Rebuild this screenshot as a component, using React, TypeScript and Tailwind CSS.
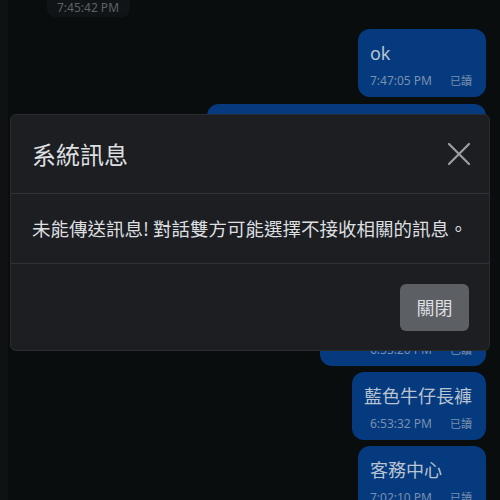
import React from "react";

const font = { fontFamily: '"Noto Sans", "Noto Sans CJK TC", sans-serif' };

function Sent({ text, time, className = "" }: { text: string; time: string; className?: string }) {
  return (
    <div className={"rounded-[12px] bg-[#053a7e] pl-3 pr-[14px] pt-[10px] pb-[8px] " + className}>
      <div className="text-[18px] leading-[28px] text-[#b9c3d1] whitespace-nowrap">{text}</div>
      <div className="mt-[6px] flex items-center justify-end leading-[16px] text-[#7b8fae] whitespace-nowrap">
        <span className="text-[12px]">{time}</span>
        <span className="ml-[18px] text-[11px]">已讀</span>
      </div>
    </div>
  );
}

export default function App() {
  return (
    <div className="relative h-[500px] w-[500px] overflow-hidden bg-[#0a0d0e]" style={font}>
      <div className="flex h-full">
        <div className="w-[8px] shrink-0 bg-[#0f1213]" />
        <div className="flex flex-1 flex-col pr-[14px]">
          <div className="-mt-[22px] ml-[39px] w-[83px] rounded-b-[8px] bg-[#111416] pt-[24px] pb-[3px] pl-[10px]">
            <div className="text-[12px] leading-[12px] text-[#5d6266] whitespace-nowrap">7:45:42 PM</div>
          </div>
          <div className="mt-[12px] flex flex-col items-end gap-[7px]">
            <Sent text="ok" time="7:47:05 PM" />
            <div className="h-[124px] w-[279px] rounded-[12px] bg-[#053a7e]" />
            <div className="flex h-[131px] w-[166px] flex-col justify-end rounded-[12px] bg-[#053a7e] pb-[8px] pl-3 pr-[14px]">
              <div className="flex items-center justify-end leading-[16px] text-[#7b8fae]">
                <span className="text-[12px]">6:53:20 PM</span>
                <span className="ml-[18px] text-[11px]">已讀</span>
              </div>
            </div>
            <Sent text="藍色牛仔長褲" time="6:53:32 PM" className="-mt-[1px]" />
            <Sent text="客務中心" time="7:02:10 PM" className="-mt-[1px]" />
          </div>
        </div>
      </div>

      <div className="absolute left-[10px] top-[114px] w-[480px] rounded-[6px] border border-[#2a2d30] bg-[#1c1e21]">
        <div className="flex h-[79px] items-center justify-between border-b border-[#2f3236] pl-[21px] pr-[18px]">
          <span className="text-[24px] text-[#dcdee0]" style={{ fontFamily: '"Noto Sans CJK TC", sans-serif' }}>系統訊息</span>
          <svg width="24" height="24" viewBox="0 0 24 24" className="text-[#9b9fa3]">
            <path d="M2 2 L22 22 M22 2 L2 22" stroke="currentColor" strokeWidth="2.2" strokeLinecap="round" />
          </svg>
        </div>
        <div className="flex h-[70px] items-center border-b border-[#2f3236] pl-[21px]">
          <span className="text-[18.5px] text-[#dcdee0] whitespace-nowrap" style={{ fontFamily: '"Noto Sans CJK TC", sans-serif' }}>
            未能傳送訊息! 對話雙方可能選擇不接收相關的訊息。
          </span>
        </div>
        <div className="flex h-[86px] items-center justify-end pr-[20px]">
          <button className="flex h-[47px] w-[69px] items-center justify-center rounded-[6px] bg-[#5c5f63] text-[18px] text-[#dcdee0]" style={{ fontFamily: '"Noto Sans CJK TC", sans-serif' }}>
            關閉
          </button>
        </div>
      </div>
    </div>
  );
}
